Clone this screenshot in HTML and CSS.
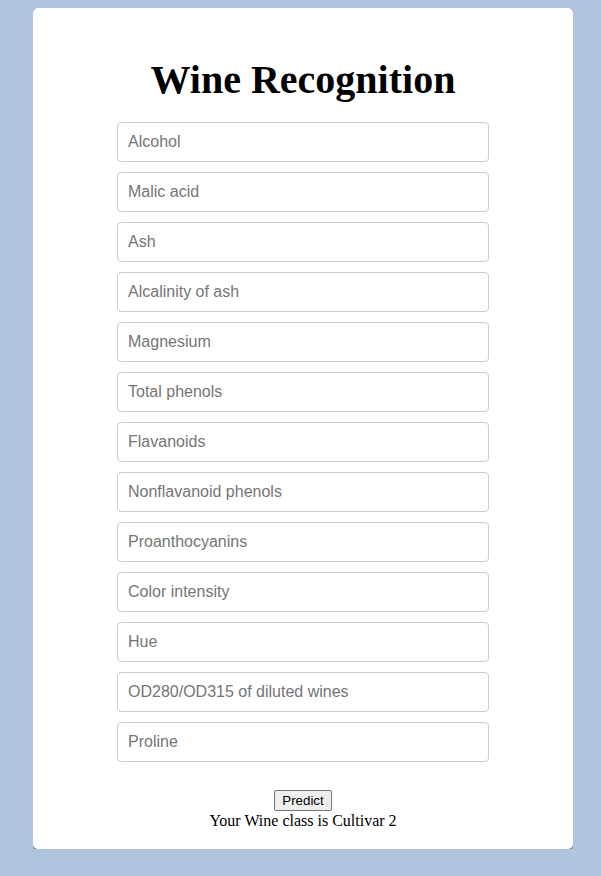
FILE: index.html
```html
<!DOCTYPE html>
<html>
<head>
<meta charset="utf-8">
<title>Wine Recognition</title>
<link rel="stylesheet" href="styles.css">
</head>
<body>
<div class="card">
  <h1 class="title">Wine Recognition</h1>
  <form class="form">
    <input class="field" type="text" placeholder="Alcohol">
    <input class="field" type="text" placeholder="Malic acid">
    <input class="field" type="text" placeholder="Ash">
    <input class="field" type="text" placeholder="Alcalinity of ash">
    <input class="field" type="text" placeholder="Magnesium">
    <input class="field" type="text" placeholder="Total phenols">
    <input class="field" type="text" placeholder="Flavanoids">
    <input class="field" type="text" placeholder="Nonflavanoid phenols">
    <input class="field" type="text" placeholder="Proanthocyanins">
    <input class="field" type="text" placeholder="Color intensity">
    <input class="field" type="text" placeholder="Hue">
    <input class="field" type="text" placeholder="OD280/OD315 of diluted wines">
    <input class="field" type="text" placeholder="Proline">
    <div class="actions">
      <button class="btn" type="button">Predict</button>
    </div>
  </form>
  <p class="result">Your Wine class is Cultivar 2</p>
</div>
</body>
</html>
```
FILE: styles.css
```css
html, body {
  background: #b0c4de;
}
body {
  margin: 8px 28px 0 33px;
  font-family: "Liberation Serif", "Times New Roman", serif;
  font-size: 16px;
  color: #000;
}
.card {
  width: 540px;
  height: 841px;
  box-sizing: border-box;
  background: #fff;
  border-radius: 5px;
  box-shadow: 0 2px 4px rgba(0, 0, 0, 0.45);
  padding-top: 49px;
  display: flex;
  flex-direction: column;
  align-items: center;
}
.title {
  margin: 0 0 19px;
  font-size: 40px;
  line-height: 46px;
  font-weight: bold;
  text-align: center;
}
.form {
  display: flex;
  flex-direction: column;
  align-items: center;
  gap: 10px;
}
.field {
  box-sizing: border-box;
  width: 372px;
  height: 40px;
  margin: 0;
  padding: 0 10px;
  border: 1px solid #ccc;
  border-radius: 4px;
  font-family: "Liberation Sans", Arial, sans-serif;
  font-size: 16px;
  color: #333;
  background: #fff;
}
.field::placeholder {
  color: #757575;
}
.actions {
  margin-top: 18px;
  display: flex;
  justify-content: center;
}
.btn {
  font-family: "Liberation Sans", Arial, sans-serif;
  font-size: 13.33px;
  padding: 1px 7px;
  height: 21px;
  border: 1px solid #767676;
  border-radius: 2px;
  background: #efefef;
  color: #000;
}
.result {
  margin: 1px 0 0;
  line-height: 18px;
  text-align: center;
}
```
